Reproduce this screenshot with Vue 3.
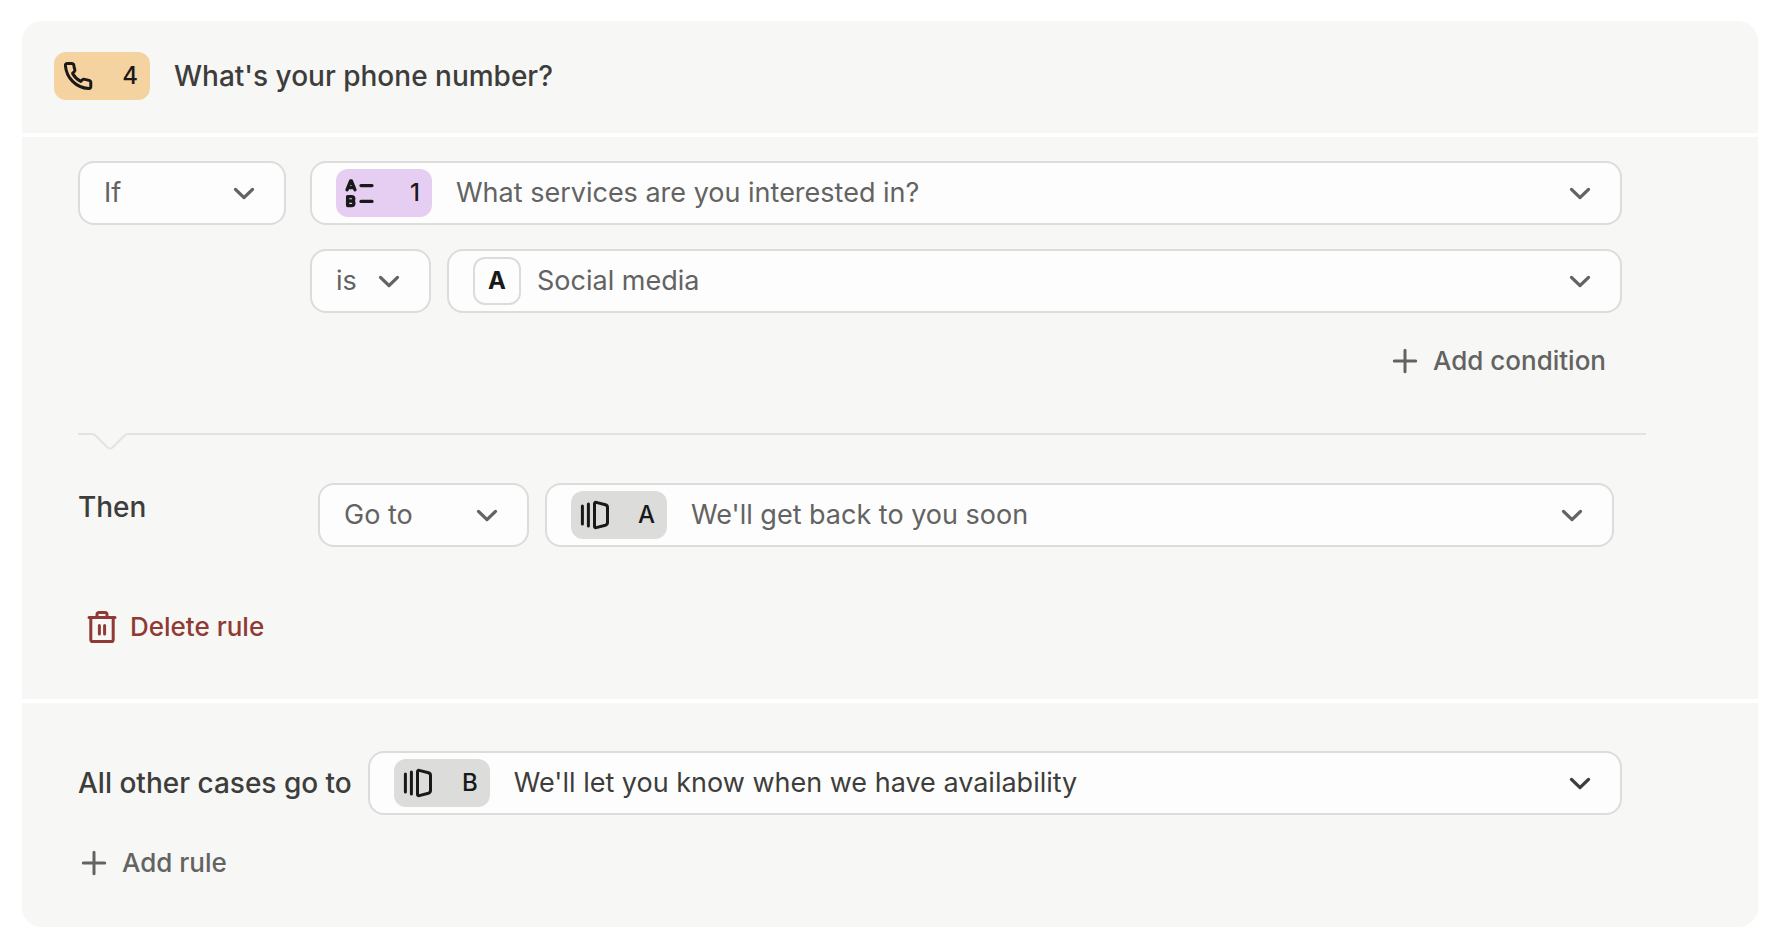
<template>
  <main class="logic-card">
    <svg class="sprite" aria-hidden="true">
      <symbol id="chevron" viewBox="0 0 32 32">
        <path d="M7.5 12.4 L16 20.6 L24.5 12.4" fill="none" stroke="currentColor" stroke-width="3.3" stroke-linecap="round" stroke-linejoin="round" />
      </symbol>
      <symbol id="plus" viewBox="0 0 32 32">
        <path d="M16 5.3 V26.7 M5.3 16 H26.7" fill="none" stroke="currentColor" stroke-width="3" stroke-linecap="round" />
      </symbol>
      <symbol id="ending" viewBox="0 0 32 32">
        <g fill="none" stroke="currentColor" stroke-width="3" stroke-linecap="round" stroke-linejoin="round">
          <path d="M3.4 7 V25 M9.4 5 V27" />
          <path d="M15.5 4.8 Q15.5 3 17.2 3.4 L26.4 5.8 Q28.5 6.4 28.5 8.4 V23.6 Q28.5 25.6 26.4 26.2 L17.2 28.6 Q15.5 29 15.5 27.2 Z" />
        </g>
      </symbol>
    </svg>

    <header class="card-header">
      <span class="badge phone">
        <svg class="icon" viewBox="0 0 32 32" aria-hidden="true">
          <path d="M3.4 5.6 Q3.2 3.4 5.4 3.4 H9.6 Q11.4 3.4 11.8 5 Q12 7.4 12.8 9.4 Q13.2 10.8 12.2 11.8 L10.6 13.4 Q13.6 18.8 18.8 21.4 L20.4 19.8 Q21.4 18.8 22.8 19.4 L27 20.4 Q28.8 20.8 28.8 22.6 V26.6 Q28.8 28.8 26.6 28.6 C14 27.6 4.4 18 3.4 5.6 Z" fill="none" stroke="currentColor" stroke-width="3" stroke-linejoin="round" />
        </svg>
        <span>4</span>
      </span>
      <h1 class="title">What's your phone number?</h1>
    </header>

    <section class="rule">
      <div class="condition">
        <div class="field connector">
          <select v-model="connector" aria-label="Connector">
            <option>If</option>
          </select>
          <svg class="icon" aria-hidden="true"><use href="#chevron" /></svg>
        </div>
        <div class="operands">
          <div class="field grow">
            <span class="badge choice">
              <svg class="icon" viewBox="0 0 32 32" aria-hidden="true">
                <g fill="none" stroke="currentColor" stroke-width="3.3" stroke-linecap="round" stroke-linejoin="round">
                  <path d="M3 12.8 L6.5 4 H7.5 L11 12.8 M4.6 10.6 H9.4" />
                  <path d="M3.6 19.6 H7.6 A2.2 2.2 0 0 1 7.6 24 H3.6 M7.6 24 A2.3 2.3 0 0 1 7.6 28.6 H3.6 V19.6" />
                  <path d="M17 8.6 H28 M17 24.4 H28" />
                </g>
              </svg>
              <span>1</span>
            </span>
            <select v-model="question" aria-label="Question">
              <option>What services are you interested in?</option>
            </select>
            <svg class="icon" aria-hidden="true"><use href="#chevron" /></svg>
          </div>
          <div class="pair">
            <div class="field operator">
              <select v-model="operator" aria-label="Operator">
                <option>is</option>
              </select>
              <svg class="icon" aria-hidden="true"><use href="#chevron" /></svg>
            </div>
            <div class="field grow answer">
              <span class="key">A</span>
              <select v-model="answer" aria-label="Answer">
                <option>Social media</option>
              </select>
              <svg class="icon" aria-hidden="true"><use href="#chevron" /></svg>
            </div>
          </div>
          <button type="button" class="link-button add-condition">
            <svg class="icon" aria-hidden="true"><use href="#plus" /></svg>
            Add condition
          </button>
        </div>
      </div>

      <div class="divider">
        <svg class="notch" viewBox="0 0 56 18" aria-hidden="true">
          <path d="M0 1 H14 Q16 1 17.5 2.5 L29.5 14.5 Q32 16.5 34.5 14.5 L46.5 2.5 Q48 1 50 1 H56" fill="none" stroke="currentColor" stroke-width="2" />
        </svg>
        <span class="line"></span>
      </div>

      <div class="action">
        <span class="label then">Then</span>
        <div class="field verb">
          <select v-model="verb" aria-label="Action">
            <option>Go to</option>
          </select>
          <svg class="icon" aria-hidden="true"><use href="#chevron" /></svg>
        </div>
        <div class="field grow">
          <span class="badge ending">
            <svg class="icon" aria-hidden="true"><use href="#ending" /></svg>
            <span>A</span>
          </span>
          <select v-model="target" aria-label="Destination">
            <option>We'll get back to you soon</option>
          </select>
          <svg class="icon" aria-hidden="true"><use href="#chevron" /></svg>
        </div>
      </div>

      <button type="button" class="link-button delete">
        <svg class="icon" viewBox="0 0 32 32" aria-hidden="true">
          <g fill="none" stroke="currentColor" stroke-width="3" stroke-linecap="round" stroke-linejoin="round">
            <path d="M3 6.4 H29 M11 6 V3.6 Q11 1.5 13 1.5 H19 Q21 1.5 21 3.6 V6" />
            <path d="M4.8 7 V28.4 Q4.8 30.5 6.8 30.5 H25.2 Q27.2 30.5 27.2 28.4 V7 M13.4 14.4 V23 M18.6 14.4 V23" />
          </g>
        </svg>
        Delete rule
      </button>
    </section>

    <footer class="fallback">
      <div class="fallback-row">
        <label class="label" for="fallback">All other cases go to</label>
        <div class="field grow dark">
          <span class="badge ending">
            <svg class="icon" aria-hidden="true"><use href="#ending" /></svg>
            <span>B</span>
          </span>
          <select id="fallback" v-model="fallback">
            <option>We'll let you know when we have availability</option>
          </select>
          <svg class="icon" aria-hidden="true"><use href="#chevron" /></svg>
        </div>
      </div>
      <button type="button" class="link-button add-rule">
        <svg class="icon" aria-hidden="true"><use href="#plus" /></svg>
        Add rule
      </button>
    </footer>
  </main>
</template>

<script setup>
import { ref } from 'vue';

const connector = ref('If');
const question = ref('What services are you interested in?');
const operator = ref('is');
const answer = ref('Social media');
const verb = ref('Go to');
const target = ref("We'll get back to you soon");
const fallback = ref("We'll let you know when we have availability");
</script>

<style>
body { background: #fff; }
</style>

<style scoped>
.logic-card { margin: 21px 22px; display: flex; flex-direction: column; gap: 4px; border-radius: 20px; overflow: hidden; font-family: Inter, "Liberation Sans", sans-serif; font-size: 28px; line-height: 36px; color: #3d3d3c; }
.logic-card * { box-sizing: border-box; }
.sprite { position: absolute; width: 0; height: 0; }
.icon { width: 32px; height: 32px; flex: none; }

.card-header, .rule, .fallback { background: #f7f7f5; }
.card-header { display: flex; align-items: center; gap: 24px; padding: 31px 32px 33px; }
.title { margin: 0; font-size: 28px; line-height: 36px; font-weight: 500; }
.label { font-weight: 500; }

.badge { width: 96px; height: 48px; flex: none; display: flex; align-items: center; justify-content: space-between; padding: 0 12px 0 8px; border-radius: 12px; font-size: 24px; line-height: 32px; font-weight: 500; color: #191919; }
.phone { background: #f5d3a0; }
.choice { background: #e6cef2; }
.ending { background: #dcdcda; }
.key { width: 48px; height: 48px; flex: none; display: flex; align-items: center; justify-content: center; border: 2px solid #dcdcda; border-radius: 12px; font-size: 24px; font-weight: 700; color: #191919; }

.field { height: 64px; display: flex; align-items: center; gap: 24px; padding: 0 24px; border: 2px solid #dcdcda; border-radius: 16px; background: #fdfdfd; color: #636362; min-width: 0; }
.field.dark { color: #3d3d3c; }
.field select { appearance: none; flex: 1; min-width: 0; width: 100%; height: 60px; margin: 0; padding: 0; border: 0; outline: 0; background: transparent; color: inherit; font: inherit; font-size: 27px; cursor: pointer; }
.grow { flex: 1; }
.answer { gap: 16px; }

.rule { padding: 24px 112px 56px 56px; }
.condition { display: flex; gap: 24px; padding-right: 24px; }
.connector { width: 208px; flex: none; }
.operands { flex: 1; min-width: 0; display: flex; flex-direction: column; gap: 24px; }
.operands > .field { flex: none; }
.pair { display: flex; gap: 16px; }
.operator { width: 121px; flex: none; gap: 12px; }

.link-button { display: flex; align-items: center; gap: 12px; padding: 0; border: 0; background: none; font: inherit; font-size: 26px; line-height: 32px; font-weight: 500; color: #636362; cursor: pointer; }
.add-condition { align-self: flex-end; margin-top: 8px; margin-right: 16px; }

.divider { display: flex; margin-top: 56px; color: #e3e3e1; }
.notch { width: 56px; height: 18px; flex: none; }
.line { flex: 1; height: 2px; background: #e3e3e1; }

.action { display: flex; gap: 16px; margin-top: 32px; padding-right: 32px; }
.then { width: 224px; flex: none; padding-top: 6px; }
.verb { width: 211px; flex: none; }
.delete { margin: 64px 0 0 8px; color: #8f3a34; }

.fallback { padding: 48px 136px 48px 56px; }
.fallback-row { display: flex; align-items: center; gap: 16px; }
.add-rule { margin-top: 32px; }
</style>
